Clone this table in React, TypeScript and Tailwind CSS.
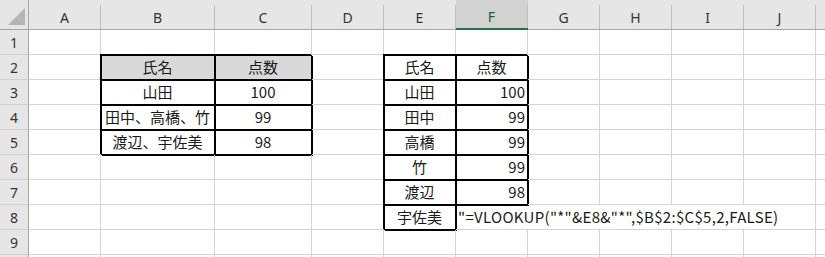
import type { ReactNode } from 'react'

type Align = 'left' | 'center' | 'right'

type Cell = {
  v: string
  align?: Align
  boxed?: boolean
  fill?: boolean
  span?: 5
  formula?: boolean
}

const COLS = ['A', 'B', 'C', 'D', 'E', 'F', 'G', 'H', 'I', 'J', 'K']
const ROWS = [1, 2, 3, 4, 5, 6, 7, 8, 9, 10]
const ACTIVE_COL = 'F'

const alignClass: Record<Align, string> = {
  left: 'justify-start pl-[2px]',
  center: 'justify-center',
  right: 'justify-end pr-[2px]',
}

// cell contents, keyed by address
const sheet: Record<string, Cell> = {
  B2: { v: '氏名', align: 'center', boxed: true, fill: true },
  C2: { v: '点数', align: 'center', boxed: true, fill: true },
  B3: { v: '山田', align: 'center', boxed: true },
  C3: { v: '100', align: 'center', boxed: true },
  B4: { v: '田中、高橋、竹', align: 'center', boxed: true },
  C4: { v: '99', align: 'center', boxed: true },
  B5: { v: '渡辺、宇佐美', align: 'center', boxed: true },
  C5: { v: '98', align: 'center', boxed: true },

  E2: { v: '氏名', align: 'center', boxed: true },
  F2: { v: '点数', align: 'center', boxed: true },
  E3: { v: '山田', align: 'center', boxed: true },
  F3: { v: '100', align: 'right', boxed: true },
  E4: { v: '田中', align: 'center', boxed: true },
  F4: { v: '99', align: 'right', boxed: true },
  E5: { v: '高橋', align: 'center', boxed: true },
  F5: { v: '99', align: 'right', boxed: true },
  E6: { v: '竹', align: 'center', boxed: true },
  F6: { v: '99', align: 'right', boxed: true },
  E7: { v: '渡辺', align: 'center', boxed: true },
  F7: { v: '98', align: 'right', boxed: true },
  E8: { v: '宇佐美', align: 'center', boxed: true },
  // formula shown as text, spills over G..J
  F8: { v: '"=VLOOKUP("*"&E8&"*",$B$2:$C$5,2,FALSE)', align: 'left', span: 5, formula: true },
}

function CornerCell() {
  return (
    <div className="bg-[#e6e6e6] border-r border-b border-[#a6a6a6] relative">
      <svg width="28" height="29" className="absolute left-0 top-0">
        <polygon points="8,25 25,25 25,8" fill="#b5b5b5" />
      </svg>
    </div>
  )
}

function ColHeader({ label }: { label: string }) {
  const active = label === ACTIVE_COL
  return (
    <div
      className={
        active
          ? 'bg-[#d2d2d2] pt-[5px] border-b-2 border-[#217346]'
          : 'bg-[#e6e6e6] pt-[5px] border-b border-[#a6a6a6]'
      }
    >
      <div
        className={`h-full border-r border-[#bdbdbd] flex items-center justify-center text-[14px] ${
          active ? 'text-[#1f5c3b]' : 'text-[#333]'
        }`}
      >
        {label}
      </div>
    </div>
  )
}

function RowHeader({ n }: { n: number }) {
  return (
    <div className="bg-[#e6e6e6] border-r border-r-[#a6a6a6] border-b border-b-[#cfcfcf] flex items-center justify-center text-[14px] text-[#333]">
      {n}
    </div>
  )
}

function SheetCell({ cell }: { cell?: Cell }) {
  if (!cell) {
    return <div className="border-r border-b border-[#d4d4d4]" />
  }
  const base =
    "flex items-center whitespace-nowrap text-[15px] text-[#1a1a1a] font-['Noto_Sans_CJK_JP',sans-serif]"
  const frame = cell.boxed
    ? 'border-r border-b border-black shadow-[-1px_-1px_0_#000,1px_1px_0_#000,inset_1px_1px_0_#000]'
    : 'border-r border-b border-[#d4d4d4]'
  return (
    <div
      className={`${base} ${frame} ${alignClass[cell.align ?? 'left']} ${cell.fill ? 'bg-[#d9d9d9]' : ''} ${
        cell.span === 5 ? 'col-span-5' : ''
      } ${cell.formula ? 'tracking-[0.3px]' : ''}`}
    >
      {cell.v}
    </div>
  )
}

export default function App() {
  const body: ReactNode[] = []
  ROWS.forEach((r) => {
    body.push(<RowHeader key={`h${r}`} n={r} />)
    let skip = 0
    COLS.forEach((c) => {
      if (skip > 0) {
        skip--
        return
      }
      const cell = sheet[`${c}${r}`]
      if (cell?.span) skip = cell.span - 1
      body.push(<SheetCell key={`${c}${r}`} cell={cell} />)
    })
  })

  return (
    <div
      className="w-[825px] h-[257px] overflow-hidden bg-white"
      style={{ fontFamily: '"Noto Sans", "Noto Sans CJK JP", sans-serif' }}
    >
      <div className="grid grid-cols-[29px_72px_114px_97px_72px_72px_72px_72px_72px_72px_72px_72px] grid-rows-[30px_repeat(10,25px)]">
        <CornerCell />
        {COLS.map((c) => (
          <ColHeader key={c} label={c} />
        ))}
        {body}
      </div>
    </div>
  )
}
